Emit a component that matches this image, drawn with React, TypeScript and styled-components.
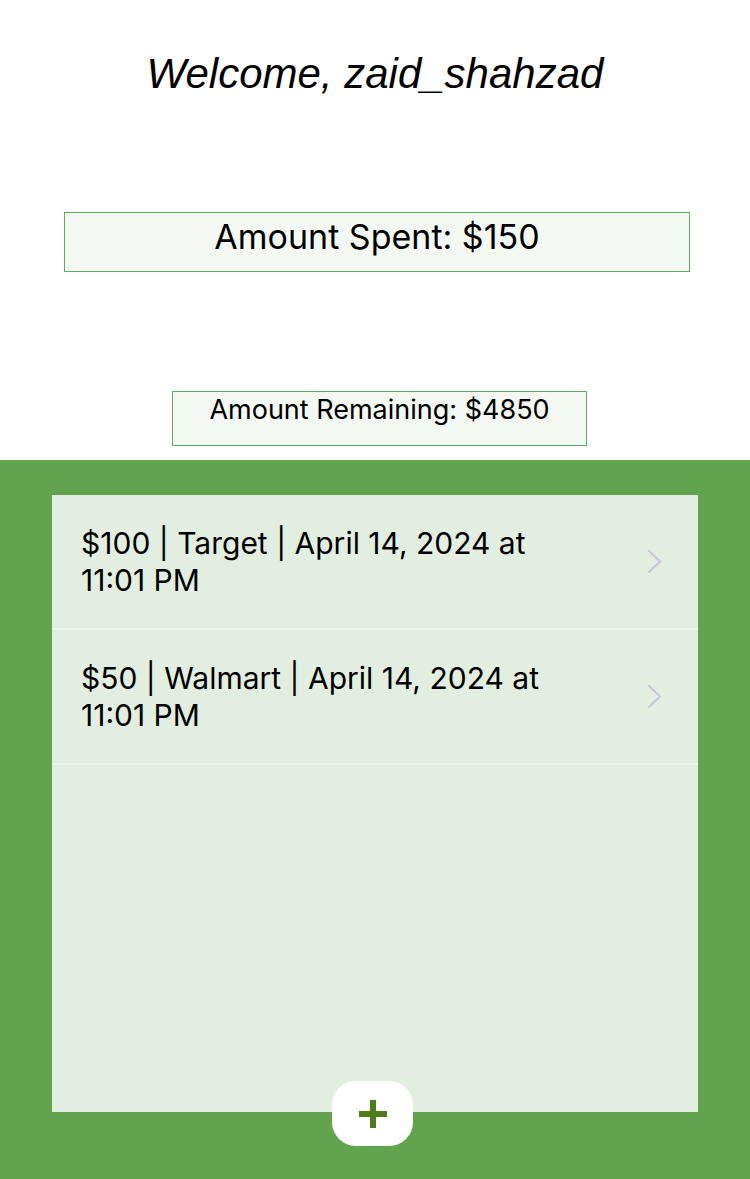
import React from 'react'
import styled, { createGlobalStyle } from 'styled-components'

const GlobalStyle = createGlobalStyle`
    html, body {
        margin: 0;
        padding: 0;
        background: #ffffff;
    }
    body {
        font-family: Inter, 'Noto Sans', sans-serif;
        color: #000000;
    }
`

const Page = styled.div`
    width: 750px;
    height: 1179px;
    display: flex;
    flex-direction: column;
    overflow: hidden;
`

const Header = styled.div`
    height: 460px;
    display: flex;
    flex-direction: column;
    align-items: center;
`

const Welcome = styled.h1`
    margin: 49px 0 0;
    font-family: 'Liberation Sans', Arial, sans-serif;
    font-style: italic;
    font-weight: normal;
    font-size: 42px;
    line-height: 50px;
    text-align: center;
`

const StatBox = styled.div<{ $width: number; $height: number; $top: number; $shift: number; $size: number; $line: number }>`
    box-sizing: border-box;
    width: ${p => p.$width}px;
    height: ${p => p.$height}px;
    margin-top: ${p => p.$top}px;
    margin-left: ${p => p.$shift}px;
    background: #f3f8f3;
    border: 1.5px solid #5aac62;
    text-align: center;
    font-size: ${p => p.$size}px;
    line-height: ${p => p.$line}px;
`

const GreenArea = styled.div`
    flex: 1;
    background: #62a44d;
    padding: 35px 52px 0;
    display: flex;
    flex-direction: column;
`

const ListPanel = styled.div`
    height: 617px;
    background: #e2eedf;
    display: flex;
    flex-direction: column;
`

const Row = styled.div`
    height: 133px;
    border-bottom: 2px solid #eff4ee;
    display: flex;
    align-items: center;
    padding: 0 34px 0 29px;
`

const RowText = styled.div`
    flex: 1;
    max-width: 520px;
    font-size: 30px;
    line-height: 37px;
`

const Chevron = styled.svg`
    margin-left: auto;
    width: 18px;
    height: 25px;
`

const AddButton = styled.button`
    align-self: center;
    margin: -31px 5px 0 0;
    width: 81px;
    height: 65px;
    border: none;
    border-radius: 24px;
    background: #ffffff;
    display: flex;
    align-items: center;
    justify-content: center;
    position: relative;
    padding: 0;
    cursor: pointer;
`

const transactions = [
    { id: 1, amount: 100, store: 'Target', date: 'April 14, 2024 at', time: '11:01 PM' },
    { id: 2, amount: 50, store: 'Walmart', date: 'April 14, 2024 at', time: '11:01 PM' },
]

export default function App(): React.ReactElement {
    return (
        <Page>
            <GlobalStyle />
            <Header>
                <Welcome>Welcome, zaid_shahzad</Welcome>
                <StatBox $width={626} $height={60} $top={113} $shift={4} $size={34} $line={48}>
                    Amount Spent: $150
                </StatBox>
                <StatBox $width={415} $height={55} $top={119} $shift={9} $size={27} $line={35}>
                    Amount Remaining: $4850
                </StatBox>
            </Header>
            <GreenArea>
                <ListPanel>
                    {transactions.map(t => (
                        <Row key={t.id}>
                            <RowText>
                                ${t.amount} | {t.store} | {t.date}
                                <br />
                                {t.time}
                            </RowText>
                            <Chevron viewBox="0 0 18 25">
                                <polyline points="3,2 14,12.5 3,23" fill="none" stroke="#c9c9d5" strokeWidth="2.2" strokeLinecap="round" strokeLinejoin="round" />
                            </Chevron>
                        </Row>
                    ))}
                </ListPanel>
                <AddButton aria-label="Add transaction">
                    <svg width="28" height="28" viewBox="0 0 28 28">
                        <rect x="11" y="0" width="6" height="28" fill="#4d7c1b" />
                        <rect x="0" y="11" width="28" height="6" fill="#4d7c1b" />
                    </svg>
                </AddButton>
            </GreenArea>
        </Page>
    )
}
